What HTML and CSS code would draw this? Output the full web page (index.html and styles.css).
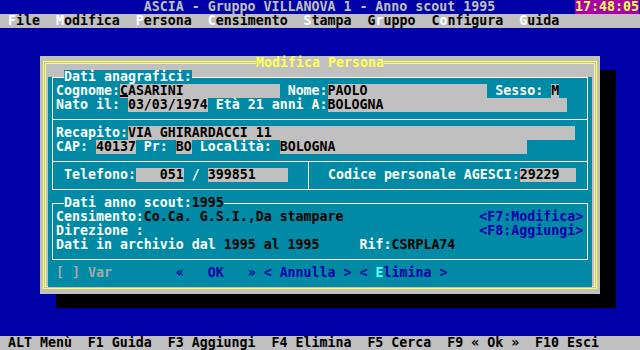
FILE: index.html
```html
<!DOCTYPE html>
<html>
  <head>
    <title>ASCIA - Modifica Persona</title>
    <link rel="stylesheet" href="styles.css">
  </head>
  <body>
    <div class="row titlebar"><span class="title">                  ASCIA - Gruppo VILLANOVA 1 - Anno scout 1995          </span><span class="clock">17:48:05</span></div>
    <div class="row menubar"> <span class="hot">F</span>ile  <span class="hot">M</span>odifica  <span class="hot">P</span>ersona  <span class="hot">C</span>ensimento  <span class="hot">S</span>tampa  G<span class="hot">r</span>uppo  C<span class="hot">o</span>nfigura  <span class="hot">G</span>uida</div>

    <div class="dialog">
      <div class="row dialog-title"><span class="dialog-name">Modifica Persona</span></div>
      <div class="frame">
        <div class="panel">

          <div class="box box-a">
            <div class="row legend">Dati anagrafici:</div>
            <div class="sect">
              <div class="row">Cognome:<span class="fld"><span class="cur">C</span>ASARINI            </span> Nome:<span class="fld">PAOLO               </span> Sesso: <span class="fld">M</span></div>
              <div class="row">Nato il: <span class="fld">03/03/1974</span> Età 21 anni A:<span class="fld">BOLOGNA                       </span></div>
            </div>
            <div class="sect">
              <div class="row">Recapito:<span class="fld">VIA GHIRARDACCI 11                                      </span></div>
              <div class="row">CAP: <span class="fld">40137</span> Pr: <span class="fld">BO</span> Località: <span class="fld">BOLOGNA                        </span></div>
            </div>
            <div class="tel">
              <div class="row tel-l"> Telefono:<span class="fld">   051</span> / <span class="fld">399851    </span></div>
              <div class="row tel-r">  Codice personale AGESCI:<span class="fld">29229  </span></div>
            </div>
          </div>

          <div class="box box-b">
            <div class="row legend">Dati anno scout:<span class="dat">1995</span></div>
            <div class="row">Censimento:<span class="dat">Co.Ca. G.S.I.,Da stampare</span>                 <span class="key">&lt;F7:Modifica&gt;</span></div>
            <div class="row">Direzione :                                          <span class="key">&lt;F8:Aggiungi&gt;</span></div>
            <div class="row">Dati in archivio dal <span class="dat">1995 al 1995</span>     Rif:<span class="dat">CSRPLA74</span></div>
          </div>

          <div class="row buttons"><span class="dim">[ ] Var</span>        <span class="key">«   OK   » &lt; Annulla &gt; &lt; <span class="hi">E</span>limina &gt;</span></div>

        </div>
      </div>
    </div>

    <div class="row status"> ALT Menù  F1 Guida  F3 Aggiungi  F4 Elimina  F5 Cerca  F9 « Ok »  F10 Esci</div>
  </body>
</html>
```

FILE: styles.css
```css
body {
  margin: 0;
  height: 350px;
  overflow: hidden;
  display: flex;
  flex-direction: column;
  background: #0000a8;
  color: #fff;
  font-family: "DejaVu Sans Mono", "Liberation Mono", monospace;
  font-size: 13.28px;
  font-weight: bold;
  line-height: 14px;
}

.row {
  height: 14px;
  white-space: pre;
}

/* top lines */
.titlebar {
  color: #c0c0c0;
}
.clock {
  display: inline-block;
  height: 14px;
  vertical-align: top;
  background: #a800a8;
  color: #ffff55;
}
.menubar {
  background: #c0c0c0;
  color: #000;
}
.hot {
  color: #fff;
}

/* dialog window */
.dialog {
  position: relative;
  width: 560px;
  height: 238px;
  margin: 28px 0 0 40px;
  padding: 5px 3px;
  box-sizing: border-box;
  background: #c0c0c0;
  box-shadow: 16px 14px 0 #000;
}
.dialog-title {
  position: absolute;
  top: 0;
  left: 0;
  right: 0;
  text-align: center;
}
.dialog-name {
  display: inline-block;
  height: 14px;
  vertical-align: top;
  background: #c0c0c0;
  color: #ffff55;
}
.frame {
  height: 100%;
  box-sizing: border-box;
  border: 3px double #ffff55;
  padding: 6px 2px;
}
.panel {
  height: 210px;
  background: #008aa5;
}

/* group boxes */
.box {
  position: relative;
  margin: 0 4px;
  border: 1px solid #fff;
}
.box-a {
  margin-top: 7px;
}
.box-b {
  margin-top: 13px;
  padding: 6px 0 7px 3px;
}
.legend {
  position: absolute;
  top: -8px;
  left: 11px;
  background: #008aa5;
}
.sect {
  padding: 6px 0 7px 3px;
  border-bottom: 1px solid #fff;
}
.tel {
  display: flex;
}
.tel-l {
  width: 252px;
  padding: 6px 0 7px 3px;
}
.tel-r {
  flex: 1;
  padding: 6px 0 7px 3px;
  border-left: 1px solid #fff;
}
.buttons {
  margin-top: 6px;
  padding-left: 8px;
}

/* text colours */
.fld {
  display: inline-block;
  height: 14px;
  vertical-align: top;
  background: #c0c0c0;
  color: #000;
}
.cur {
  display: inline-block;
  height: 14px;
  vertical-align: top;
  background: linear-gradient(transparent 11px, #000 11px, #000 13px, transparent 13px);
}
.dat {
  color: #000;
}
.key {
  color: #0000a8;
}
.hi {
  color: #55ffff;
}
.dim {
  color: #a8a8a8;
}

.status {
  margin-top: auto;
  background: #c0c0c0;
  color: #000;
}
```
